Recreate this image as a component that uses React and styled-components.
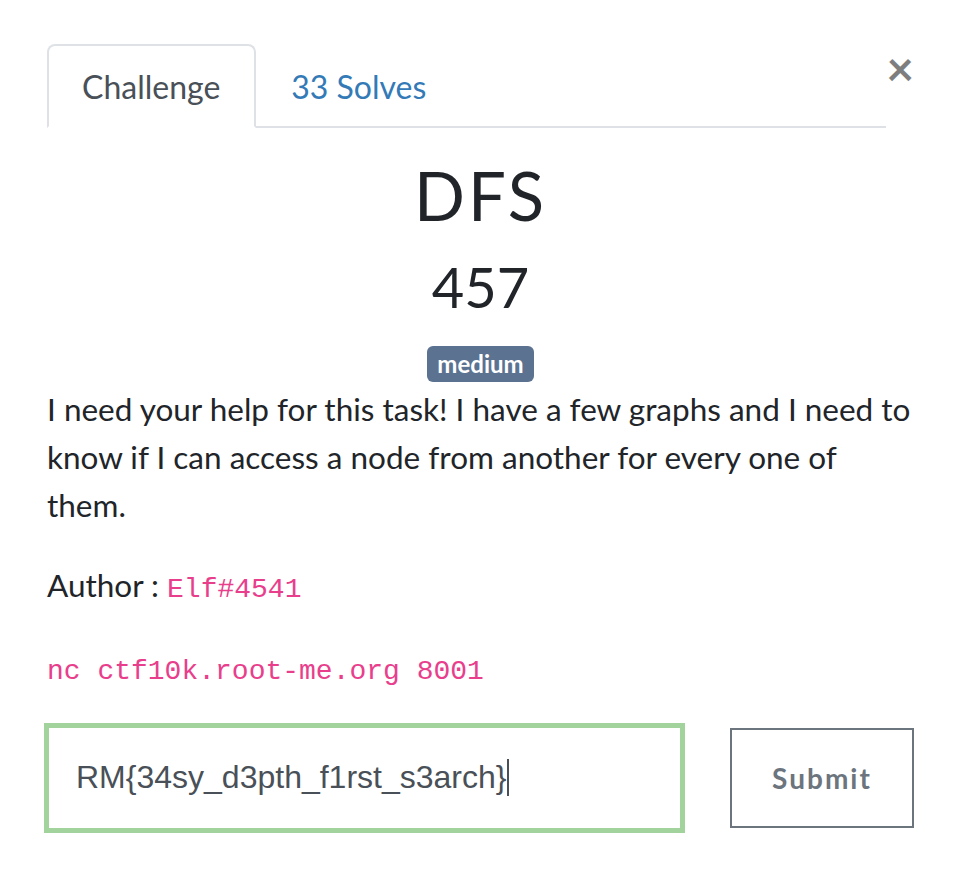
import React from "react"
import styled, { createGlobalStyle } from "styled-components"

const GlobalStyle = createGlobalStyle`
  body {
    margin: 0;
    background: #fff;
    font-family: Lato, "Open Sans", sans-serif;
    color: #212529;
  }
`

const Modal = styled.div`
  width: 867px;
  padding: 44px 0 40px 47px;
`

const Header = styled.div`
  display: flex;
  align-items: flex-start;
`

const Tabs = styled.ul`
  display: flex;
  width: 839px;
  margin: 0;
  padding: 0;
  list-style: none;
  border-bottom: 2px solid #dee2e6;
`

const Tab = styled.li`
  display: flex;
  align-items: center;
  height: 80px;
  padding: 0 34px 0 33px;
  margin-bottom: -2px;
  border: 2px solid ${(p) => (p.$active ? "#dee2e6" : "transparent")};
  border-bottom-color: ${(p) => (p.$active ? "#fff" : "transparent")};
  border-radius: 8px 8px 0 0;
  font-size: 32px;
  color: ${(p) => (p.$active ? "#495057" : "#337ab7")};
  background: ${(p) => (p.$active ? "#fff" : "transparent")};
  cursor: pointer;
`

const Close = styled.button`
  width: 28px;
  margin: 0;
  padding: 0;
  border: 0;
  background: none;
  font-family: Lato, sans-serif;
  font-size: 48px;
  font-weight: 700;
  line-height: 1;
  color: #000;
  opacity: 0.5;
  text-align: right;
  cursor: pointer;
`

const Title = styled.h2`
  margin: 27px 0 18px;
  font-size: 67px;
  font-weight: 400;
  letter-spacing: 3px;
  line-height: 1.2;
  text-align: center;
`

const Value = styled.h3`
  margin: 0;
  font-size: 56px;
  font-weight: 400;
  line-height: 1.2;
  text-align: center;
`

const Tags = styled.div`
  display: flex;
  justify-content: center;
  margin-top: 25px;
`

const Badge = styled.span`
  display: inline-block;
  padding: 0 10px;
  height: 36px;
  line-height: 35px;
  border-radius: 6px;
  background: #5b7291;
  color: #fff;
  font-size: 24px;
  font-weight: 700;
`

const Description = styled.div`
  margin-top: 3px;
  font-size: 31.5px;
  line-height: 48px;
`

const Para = styled.p`
  margin: 0 0 ${(p) => p.$gap ?? 32}px;
`

const Code = styled.code`
  font-family: "Liberation Mono", monospace;
  font-size: 28px;
  color: #e83e8c;
`

const SubmitRow = styled.form`
  display: flex;
  align-items: center;
  gap: 48px;
  margin-top: 30px;
`

const FlagInput = styled.div`
  display: flex;
  align-items: center;
  box-sizing: border-box;
  width: 635px;
  height: 104px;
  padding-left: 27px;
  border: 2px solid #a3d39c;
  box-shadow: 0 0 0 3px #a3d39c;
  font-family: "Liberation Sans", Arial, sans-serif;
  font-size: 32px;
  color: #495057;
`

const Caret = styled.span`
  display: inline-block;
  width: 2px;
  height: 37px;
  margin-left: 1px;
  background: #495057;
`

const SubmitButton = styled.button`
  box-sizing: border-box;
  width: 184px;
  height: 100px;
  border: 2px solid #6c757d;
  background: #fff;
  font-family: Lato, sans-serif;
  font-size: 28px;
  font-weight: 700;
  letter-spacing: 2px;
  color: #6c757d;
  cursor: pointer;
`

export default function App() {
  return (
    <>
      <GlobalStyle />
      <Modal>
        <Header>
          <Tabs>
            <Tab $active>Challenge</Tab>
            <Tab>33 Solves</Tab>
          </Tabs>
          <Close aria-label="Close">×</Close>
        </Header>

        <Title>DFS</Title>
        <Value>457</Value>
        <Tags>
          <Badge>medium</Badge>
        </Tags>

        <Description>
          <Para>
            I need your help for this task! I have a few graphs and I need to know if I can
            access a node from another for every one of them.
          </Para>
          <Para $gap={29}>
            Author : <Code>Elf#4541</Code>
          </Para>
          <Para $gap={0}>
            <Code>nc ctf10k.root-me.org 8001</Code>
          </Para>
        </Description>

        <SubmitRow onSubmit={(e) => e.preventDefault()}>
          <FlagInput role="textbox">
            RM{"{"}34sy_d3pth_f1rst_s3arch{"}"}
            <Caret />
          </FlagInput>
          <SubmitButton type="submit">Submit</SubmitButton>
        </SubmitRow>
      </Modal>
    </>
  )
}
